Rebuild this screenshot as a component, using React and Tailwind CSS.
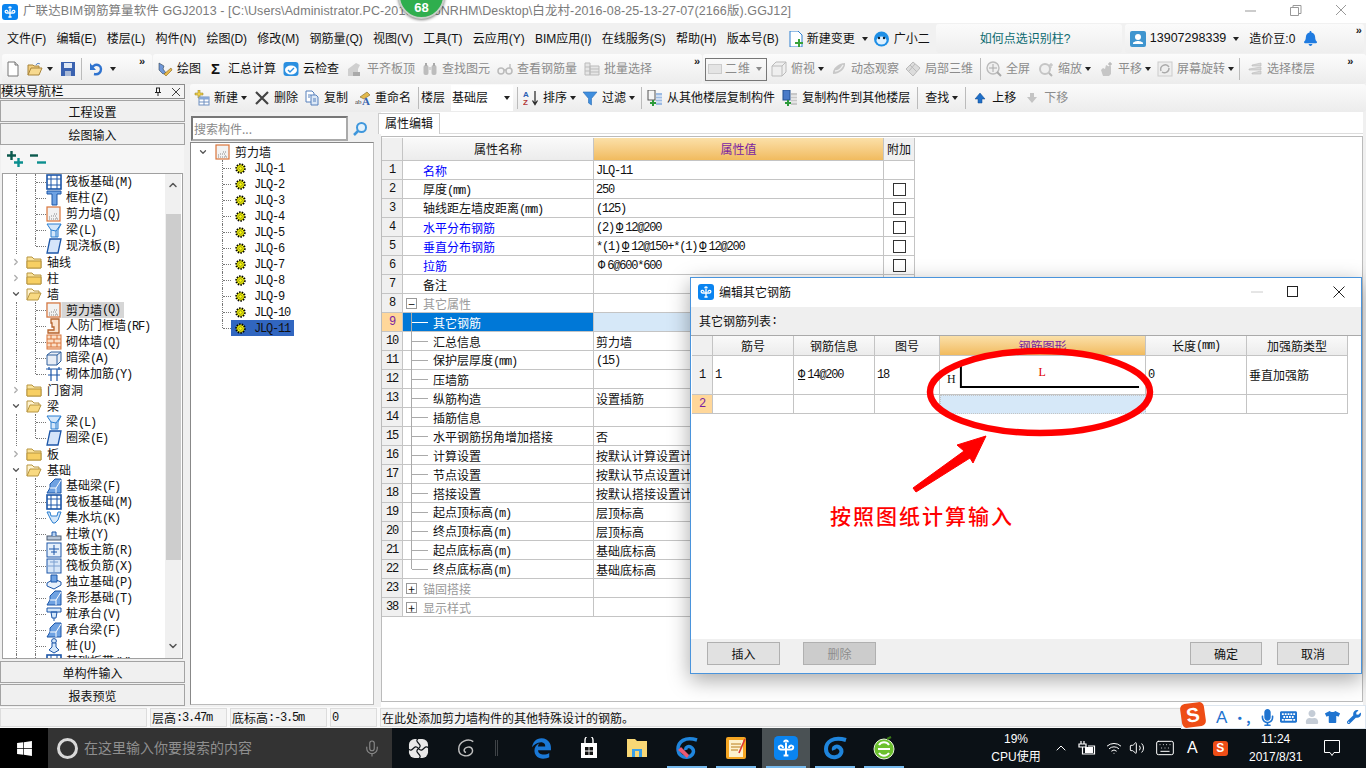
import React from 'react';
import { ChevronUp, ChevronDown, ChevronRight, Mic, Wifi, Volume2, Keyboard } from 'lucide-react';
import { FaBell, FaEdgeLegacy, FaKeyboard, FaMicrophone, FaTshirt, FaUser, FaWrench, FaWindows } from 'react-icons/fa';

// SimSun in the original has half-width latin, so latin runs get squeezed to 6px
const Sim = ({ children }) =>
  String(children)
    .split(/([\x20-\x7e]+)/)
    .map((part, i) =>
      /^[\x20-\x7e]/.test(part) ? (
        <span key={i} className="font-['Liberation_Mono',monospace] tracking-[-1.2px]">{part}</span>
      ) : (
        part
      )
    );

const Rebar = ({ plain }) => (
  <span className={`font-['Liberation_Mono',monospace] mx-[2px] ${plain ? '' : 'underline'}`}>Φ</span>
);

const I = ({ children, className = '' }) => (
  <svg viewBox="0 0 16 16" className={`w-4 h-4 shrink-0 ${className}`}>{children}</svg>
);

const Caret = ({ className = '' }) => (
  <svg viewBox="0 0 6 4" className={`w-[6px] h-[4px] shrink-0 ${className}`}><path d="M0 0h6L3 4z" fill="#222" /></svg>
);

const More = ({ className = '' }) => <span className={`text-[11px] leading-none font-bold text-[#222] -mt-4 ${className}`}>»</span>;

const Sep = ({ className = '' }) => <div className={`w-px h-[22px] bg-[#bbb] shrink-0 ${className}`} />;

const Logo = ({ className = 'w-4 h-4' }) => (
  <svg viewBox="0 0 16 16" className={`shrink-0 ${className}`}>
    <rect width="16" height="16" rx="3" fill="#0a84f0" />
    <path d="M8 13.2V4.4M8 9H4.6C3 9 2.6 6.6 4.2 6.4 5.4 6.3 6 7.2 6 8M8 9h3.4c1.6 0 2-2.4.4-2.6-1.2-.1-1.8.8-1.8 1.6M6.8 4.2C6.8 2.6 9.2 2.6 9.2 4.2M6.4 13h3.2" fill="none" stroke="#fff" strokeWidth="1.3" />
  </svg>
);

// toolbar icons
const tb = {
  doc: <I><path d="M3 1h7l3 3v11H3z" fill="#fff" stroke="#777" /><path d="M10 1v3h3" fill="#ddd" stroke="#777" /></I>,
  open: <I><path d="M1 14V4h5l1 1h5v2" fill="#f3cf80" stroke="#a8843a" /><path d="M1 14h11l3-7H4z" fill="#f7d98f" stroke="#a8843a" /><path d="M9 4c1-2 3-2 4-1" fill="none" stroke="#5a87c5" /></I>,
  save: <I><rect x="1" y="1" width="14" height="14" fill="#3a62b0" /><rect x="4" y="2" width="8" height="5" fill="#dfe8f5" /><rect x="5" y="10" width="6" height="5" fill="#a9b9d6" /></I>,
  undo: <I><path d="M6 13c5 1 7-2 7-5 0-3-3-5-6-4L4 6" fill="none" stroke="#2f73cf" strokeWidth="2.4" /><path d="M2 2v7h6z" fill="#2f73cf" /></I>,
  draw: <I><path d="M2 2l5 3-1 3 3 4-3 1-4-4z" fill="#6f97d8" stroke="#345" strokeWidth=".6" /><path d="M7 13l7-6 1 2-6 6z" fill="#e8b84a" stroke="#86651c" strokeWidth=".6" /></I>,
  cloud: <I><rect x=".5" y="1" width="15" height="14" rx="3" fill="#2b8fe0" /><ellipse cx="8" cy="9" rx="6" ry="4.5" fill="#fff" /><path d="M5 9l2 2 4-4" fill="none" stroke="#2b8fe0" strokeWidth="1.4" /></I>,
  level: <I><path d="M1 15V8l8-6 4 2-2 4v7z" fill="#cfcfcf" /><path d="M6 15v-4h7v4z" fill="#a9a9a9" /></I>,
  find: <I><rect x="1.5" y="4" width="5" height="10" rx="2" fill="#bdbdbd" /><rect x="9.5" y="4" width="5" height="10" rx="2" fill="#bdbdbd" /><rect x="6" y="6" width="4" height="3" fill="#d5d5d5" /><rect x="3" y="2" width="2" height="3" fill="#aaa" /><rect x="11" y="2" width="2" height="3" fill="#aaa" /></I>,
  glasses: <I><circle cx="4" cy="10" r="3" fill="none" stroke="#bbb" strokeWidth="1.5" /><circle cx="12" cy="10" r="3" fill="none" stroke="#bbb" strokeWidth="1.5" /><path d="M7 9h2M13 3v4" stroke="#bbb" strokeWidth="1.3" /></I>,
  batch: <I><path d="M1 2h5v12H1zM6 5h9v9H6z" fill="#e6e6e6" stroke="#bbb" /><path d="M1 6h5M1 10h5M6 8h9M6 11h9" stroke="#bbb" /></I>,
  cube: <I><path d="M1 5l4-4h10v10l-4 4H1z" fill="#efefef" stroke="#bbb" /><path d="M1 5h10v10M11 5l4-4" fill="none" stroke="#bbb" /></I>,
  orbit: <I><path d="M2 13C1 8 7 2 14 2c1 5-5 11-12 11z" fill="#c8c8c8" /><path d="M4 10c3 0 6-2 8-6" fill="none" stroke="#efefef" strokeWidth="1.4" /></I>,
  local: <I><path d="M8 1l7 6-7 8-7-7z" fill="#dcdcdc" stroke="#bbb" /><path d="M5 4l7 7M10 3l-6 7" stroke="#bbb" /></I>,
  full: <I><circle cx="7" cy="7" r="6" fill="#efefef" stroke="#bbb" strokeWidth="1.4" /><path d="M7 3v8M3 7h8" stroke="#aaa" /><path d="M11 11l4 4" stroke="#aaa" strokeWidth="2" /></I>,
  zoom: <I><circle cx="7" cy="8" r="5" fill="#f0f0f0" stroke="#c5c5c5" strokeWidth="2" /><path d="M11 12l3 3" stroke="#b5b5b5" strokeWidth="2" /><path d="M13 2v5M11 4h4" stroke="#bbb" /></I>,
  pan: <I><path d="M3 9l2-2 2 1 1-4 2 1 3 1v7l-2 2H5z" fill="#c6c6c6" /><path d="M12 1v5M10 3h4" stroke="#aaa" /></I>,
  rotate: <I><rect x="1" y="1" width="14" height="14" fill="#eee" stroke="#ccc" /><path d="M4 10a4.5 4.5 0 0 1 8-4M12 7a4.5 4.5 0 0 1-7 4" fill="none" stroke="#aaa" strokeWidth="1.4" /></I>,
  floors: <I><path d="M5 4l9-2v3H5zM2 8l12-2v3H2zM5 12l9-2v3H5z" fill="#d8d8d8" stroke="#bbb" strokeWidth=".6" /></I>,
  add: <I><path d="M1 3h3V0h2v3h3v2H6v3H4V5H1z" fill="#f1d14c" stroke="#8d7a19" strokeWidth=".5" /><rect x="5" y="7" width="10" height="8" fill="#fff" stroke="#6f8fc0" /><rect x="5" y="7" width="10" height="2.5" fill="#87a8d8" /><path d="M10 9v6M5 12h10" stroke="#6f8fc0" /></I>,
  del: <I><path d="M2 2l12 12M14 2L2 14" stroke="#444" strokeWidth="2.2" /></I>,
  copy: <I><path d="M2 1h6l2 2v9H2z" fill="#fff" stroke="#5680bc" /><path d="M7 5h5l2 2v8H7z" fill="#dce8f6" stroke="#5680bc" /><path d="M4 5h3M4 7h2M9 9h3M9 11h3" stroke="#5680bc" /></I>,
  rename: <I><path d="M5 7l7-5 3 3-6 4z" fill="#e2b94c" stroke="#7e6520" strokeWidth=".6" /><text x="0" y="14" fontSize="7" fill="#333" fontFamily="Liberation Serif">ab</text><text x="7" y="15" fontSize="11" fontWeight="700" fill="#3462ad" fontFamily="Liberation Serif">A</text></I>,
  sort: <I><text x="0" y="7" fontSize="8" fontWeight="700" fill="#2a5fb3" fontFamily="Liberation Sans">A</text><text x="0" y="15" fontSize="8" fontWeight="700" fill="#b33a3a" fontFamily="Liberation Sans">Z</text><path d="M12 1v12M9.5 10.5l2.5 4 2.5-4" fill="none" stroke="#222" strokeWidth="1.2" /></I>,
  funnel: <I><path d="M1 2h14L9.5 8.5V15l-3-2V8.5z" fill="#3f8ede" stroke="#2a6cb3" strokeWidth=".6" /></I>,
  fromFloor: <I><rect x="1" y="0" width="7" height="10" fill="#f5f5f5" stroke="#555" /><rect x="9" y="3" width="6" height="12" fill="#9dbbe3" /><path d="M9 6h6M9 9h6M9 12h6" stroke="#fff" /><path d="M3 12h2v-2h2v2h2v2H7v2H5v-2H3z" fill="#2c9a3a" /></I>,
  toFloor: <I><rect x="1" y="0" width="7" height="10" fill="#4a7bc8" stroke="#24508f" /><rect x="9" y="3" width="6" height="12" fill="#c8c8c8" /><path d="M9 6h6M9 9h6M9 12h6" stroke="#fff" /><path d="M3 12h2v-2h2v2h2v2H7v2H5v-2H3z" fill="#2c9a3a" /></I>,
  up: <I><path d="M8 3l5 6h-3v4H6V9H3z" fill="#1f6fc8" stroke="#104a8c" strokeWidth=".5" /></I>,
  down: <I><path d="M8 13l5-6h-3V3H6v4H3z" fill="#c4c4c4" /></I>,
  change: <I><path d="M2 0h8l4 4v12H2z" fill="#fff" stroke="#2d7fd0" /><path d="M7 11h3V8h2v3h3v2h-3v3h-2v-3H7z" fill="#38a23a" /></I>,
  face: <svg viewBox="0 0 16 16" className="w-[17px] h-[16px] shrink-0"><circle cx="8" cy="8" r="7.5" fill="#1e8fe6" /><ellipse cx="8" cy="9.5" rx="5" ry="4" fill="#dff1ff" /><circle cx="5.5" cy="7" r="1.2" fill="#123" /><circle cx="10.5" cy="7" r="1.2" fill="#123" /></svg>,
};

// tree icons
const tree = {
  raft: <I><rect x="1" y="1" width="14" height="14" fill="#fff" stroke="#1c56a8" strokeWidth="1.6" /><path d="M1 5h14M1 11h14M5 1v14M11 1v14" stroke="#1c56a8" /></I>,
  column: <I><path d="M1 1h14v3h-4v11H6V4H1z" fill="#6fa2e2" stroke="#1c56a8" /></I>,
  wall: <I><rect x="1" y="1" width="13" height="14" fill="#f2f2f2" stroke="#d9743a" strokeWidth="1.2" /><path d="M3 13h9M5 10h6M3 11h2M8 8h3M10 12h2" stroke="#888" strokeDasharray="1 1" /></I>,
  beam: <I><path d="M1 2h14l-3 6v7H5V8z" fill="#d4e7fa" stroke="#2b7fd0" /><path d="M5 8l5 1 5-7M10 9v6" fill="none" stroke="#2b7fd0" /></I>,
  slab: <I><path d="M4 1h11l-3 14H1z" fill="#d5e5fa" stroke="#1c56a8" strokeWidth="1.3" /></I>,
  rf: <I><path d="M5 1h8v14H2v-3h6V9H6V5H5z" fill="#fbe4cf" stroke="#b5622b" strokeWidth="1.3" /></I>,
  brick: <I><rect x="1" y="1" width="14" height="14" fill="#fbe0c8" stroke="#d9743a" /><path d="M1 5h14M1 9h14M1 13h14M5 1v4M11 1v4M8 5v4M5 9v4M11 9v4" stroke="#d9743a" /></I>,
  hidden: <I><path d="M1 5l4-3h10v9l-4 4H1z" fill="#e8edf5" stroke="#2f5f9c" /><path d="M1 5h10v10M11 5l4-3" fill="none" stroke="#2f5f9c" /></I>,
  rebar: <I><path d="M0 3h16M3 1v3M13 1v3M5 3v12M11 3v12M2 9h12" fill="none" stroke="#1c56a8" strokeWidth="1.2" /></I>,
  strip: <I><path d="M1 15l3-5V6l5-5h6v14z" fill="#6fa2e2" stroke="#1c56a8" /><path d="M4 10h6v5M10 10l5-8" fill="none" stroke="#fff" /></I>,
  pit: <I><path d="M1 2l3 0 1 4h6l1-4h3l-3 8-3 3H7l-2-3z" fill="#d4e7fa" stroke="#2b7fd0" /></I>,
  pier: <I><rect x="1" y="10" width="14" height="4" fill="#b8c6d8" stroke="#4a5a70" /><path d="M6 10V6h4v4" fill="#b9d2f0" stroke="#1c56a8" /></I>,
  main: <I><rect x="1" y="1" width="14" height="14" fill="#e6f0fb" stroke="#1c56a8" /><path d="M3 7h10M8 3v10M5 10h6" stroke="#1c56a8" /></I>,
  neg: <I><rect x="1" y="1" width="14" height="14" fill="#d7e6f8" stroke="#1c56a8" /><path d="M1 8h14M8 1v14M4 4h8" stroke="#7a9fd0" /></I>,
  iso: <I><path d="M1 9l7-4 7 3v3l-7 4-7-3z" fill="#e9f1fb" stroke="#1c56a8" /><path d="M5 1h6v7H5z" fill="#6fa2e2" stroke="#1c56a8" /></I>,
  cap: <I><path d="M1 2h14v4H1zM5 6h6l-1 6H6zM8 12v3" fill="#d4e7fa" stroke="#1c56a8" /></I>,
  pile: <I><circle cx="8" cy="3" r="2.4" fill="#d4e7fa" stroke="#1c56a8" /><path d="M6 5h4v4l3 3-5 3-5-3 3-3z" fill="#d4e7fa" stroke="#1c56a8" /></I>,
  closed: <I><path d="M1 3h5l2 2h7v9H1z" fill="#fbe39a" stroke="#b79540" /><path d="M1 7h14v7H1z" fill="#f7cf63" stroke="#b79540" /></I>,
  opened: <I><path d="M1 14V3h5l2 2h5v2" fill="#fff3cf" stroke="#b79540" /><path d="M1 14h11l3-7H4z" fill="#f8d981" stroke="#b79540" /></I>,
};

const Gear = () => (
  <svg viewBox="0 0 12 12" className="w-[11px] h-[11px] shrink-0">
    <circle cx="6" cy="6" r="4.6" fill="#ff0" stroke="#000" strokeWidth="2.2" strokeDasharray="1.6 1.2" />
    <circle cx="6" cy="6" r="2" fill="#ff0" stroke="#444" strokeWidth=".6" />
  </svg>
);

function Tool({ icon, label, caret, off, className = '', gap = 'gap-1' }) {
  return (
    <div className={`flex items-center shrink-0 whitespace-nowrap ${gap} ${off ? 'text-[#8c8c8c]' : 'text-[#111]'} ${className}`}>
      {icon}
      <span>{label}</span>
      {caret && <Caret className="-ml-px" />}
    </div>
  );
}

const menus = ['文件(F)', '编辑(E)', '楼层(L)', '构件(N)', '绘图(D)', '修改(M)', '钢筋量(Q)', '视图(V)', '工具(T)', '云应用(Y)', 'BIM应用(I)', '在线服务(S)', '帮助(H)', '版本号(B)'];

function TitleBar() {
  return (
    <div className="h-[23px] bg-white flex items-center relative shrink-0">
      <Logo className="w-4 h-4 ml-[2px]" />
      <span className="ml-[5px] text-[12.5px] tracking-[0.1px] text-[#7b7b7b] whitespace-nowrap font-['Liberation_Sans','Noto_Sans_CJK_SC',sans-serif]">
        广联达BIM钢筋算量软件 GGJ2013 - [C:\Users\Administrator.PC-20160816NRHM\Desktop\白龙村-2016-08-25-13-27-07(2166版).GGJ12]
      </span>
      <svg viewBox="0 0 12 12" className="absolute left-[1245px] top-[5px] w-3 h-3"><path d="M0 6h11" stroke="#999" /></svg>
      <svg viewBox="0 0 12 12" className="absolute left-[1290px] top-[5px] w-3 h-3"><path d="M.5 2.5h8v8h-8zM3 2.5v-2h8v8H8.5" fill="none" stroke="#999" /></svg>
      <svg viewBox="0 0 12 12" className="absolute left-[1335px] top-[4px] w-3 h-3"><path d="M1 1l10 10M11 1L1 11" stroke="#999" /></svg>
      <div className="absolute left-[398px] top-[-28px] w-[47px] h-[47px] rounded-full bg-[#2fae4e] border-[2px] border-[#c8cfc9] shadow-[0_1px_3px_rgba(0,0,0,0.5)] flex items-end justify-center pb-[3px] text-white text-[13px] font-bold leading-none font-['Liberation_Sans',sans-serif]">68</div>
    </div>
  );
}

function MenuBar() {
  return (
    <div className="h-[31px] bg-[#f1f1f1] flex items-start shrink-0 text-[12px] font-['Liberation_Sans','Noto_Sans_CJK_SC',sans-serif] text-[#111]">
      <div className="flex items-center h-[30px] pt-px pl-[7px] gap-[10.2px] whitespace-nowrap">
        {menus.map((m) => <span key={m}>{m}</span>)}
      </div>
      <Tool icon={tb.change} label="新建变更" gap="gap-[3px]" className="ml-[9px] h-[30px] pt-px" />
      <Caret className="ml-[7px] mt-[14px]" />
      <Tool icon={tb.face} label="广小二" gap="gap-1" className="ml-[5px] h-[30px] pt-px" />
      <div className="ml-[6px] mt-[1px] w-[186px] h-[29px] rounded-[3px] bg-gradient-to-b from-[#fbfbfb] to-[#eeeeee] flex items-center pl-[44px] pt-px text-[#0b6a70]">如何点选识别柱?</div>
      <div className="ml-[3px] mt-[1px] w-[239px] h-[29px] rounded-[3px] bg-gradient-to-b from-[#fbfbfb] to-[#eeeeee] flex items-center relative">
        <svg viewBox="0 0 16 16" className="w-4 h-4 ml-[5px]"><rect width="16" height="16" rx="2" fill="#3f95cf" /><circle cx="8" cy="6" r="3" fill="#fff" /><path d="M3 13h10v-1c0-1-3-2-5-2s-5 1-5 2z" fill="#fff" /></svg>
        <span className="ml-[4px] text-[12.5px]">13907298339</span>
        <Caret className="ml-[7px]" />
        <span className="ml-[10px]">造价豆:0</span>
        <FaBell className="ml-[9px] w-[13px] h-[15px] text-[#1f7be0]" />
        <More className="ml-auto mr-[2px]" />
      </div>
    </div>
  );
}

function MainToolbar() {
  const bar = 'h-[30px] rounded-[3px] bg-gradient-to-b from-[#fcfcfc] to-[#ececec] flex items-center';
  return (
    <div className="h-[30px] bg-[#f1f1f1] flex shrink-0 text-[12px] pl-[2px] gap-px whitespace-nowrap font-['Liberation_Sans','Noto_Sans_CJK_SC',sans-serif]">
      <div className={`${bar} w-[150px]`}>
        <span className="ml-[3px] flex">{tb.doc}</span>
        <span className="ml-[6px] flex">{tb.open}</span>
        <Caret className="ml-[4px]" />
        <span className="ml-[7px] flex">{tb.save}</span>
        <Sep className="ml-[5px]" />
        <span className="ml-[6px] flex">{tb.undo}</span>
        <Caret className="ml-[6px]" />
        <More className="ml-[23px]" />
      </div>
      <div className={`${bar} w-[549px]`}>
        <Tool icon={tb.draw} label="绘图" className="ml-[4px]" />
        <span className="ml-[10px] w-[9px] font-bold text-[15px] -mt-[2px]">Σ</span>
        <span className="ml-[8px]">汇总计算</span>
        <Tool icon={tb.cloud} label="云检查" className="ml-[7px]" />
        <Tool off icon={tb.level} label="平齐板顶" className="ml-[8px]" />
        <Tool off icon={tb.find} label="查找图元" className="ml-[7px]" />
        <Tool off icon={tb.glasses} label="查看钢筋量" className="ml-[7px]" />
        <Tool off icon={tb.batch} label="批量选择" className="ml-[7px]" />
        <More className="ml-[42px]" />
      </div>
      <div className={`${bar} flex-1`}>
        <div className="ml-[2px] w-[62px] h-[23px] border border-[#777] flex items-center text-[#8c8c8c] px-[2px]">
          <div className="w-[14px] h-[10px] bg-[#e4e4e4] border border-[#ccc]" />
          <span className="ml-[3px] tracking-[1px]">二维</span>
          <Caret className="ml-auto opacity-50 mr-[2px]" />
        </div>
        <Tool off icon={tb.cube} label="俯视" caret className="ml-[4px]" />
        <Tool off icon={tb.orbit} label="动态观察" className="ml-[7px]" />
        <Tool off icon={tb.local} label="局部三维" className="ml-[6px]" />
        <Sep className="ml-[7px]" />
        <Tool off icon={tb.full} label="全屏" className="ml-[5px]" />
        <Tool off icon={tb.zoom} label="缩放" caret className="ml-[8px]" />
        <Tool off icon={tb.pan} label="平移" caret className="ml-[7px]" />
        <Tool off icon={tb.rotate} label="屏幕旋转" caret className="ml-[6px]" />
        <Sep className="ml-[5px]" />
        <Tool off icon={tb.floors} label="选择楼层" className="ml-[7px]" />
        <More className="ml-[32px]" />
      </div>
    </div>
  );
}

const navTree = [
  { k: 'raft', t: '筏板基础(M)', d: 1 },
  { k: 'column', t: '框柱(Z)', d: 1 },
  { k: 'wall', t: '剪力墙(Q)', d: 1 },
  { k: 'beam', t: '梁(L)', d: 1 },
  { k: 'slab', t: '现浇板(B)', d: 1, end: true },
  { k: 'closed', t: '轴线' },
  { k: 'closed', t: '柱' },
  { k: 'opened', t: '墙', open: true },
  { k: 'wall', t: '剪力墙(Q)', d: 1, sel: true },
  { k: 'rf', t: '人防门框墙(RF)', d: 1 },
  { k: 'brick', t: '砌体墙(Q)', d: 1 },
  { k: 'hidden', t: '暗梁(A)', d: 1 },
  { k: 'rebar', t: '砌体加筋(Y)', d: 1, end: true },
  { k: 'closed', t: '门窗洞' },
  { k: 'opened', t: '梁', open: true },
  { k: 'beam', t: '梁(L)', d: 1 },
  { k: 'slab', t: '圈梁(E)', d: 1, end: true },
  { k: 'closed', t: '板' },
  { k: 'opened', t: '基础', open: true },
  { k: 'strip', t: '基础梁(F)', d: 1 },
  { k: 'raft', t: '筏板基础(M)', d: 1 },
  { k: 'pit', t: '集水坑(K)', d: 1 },
  { k: 'pier', t: '柱墩(Y)', d: 1 },
  { k: 'main', t: '筏板主筋(R)', d: 1 },
  { k: 'neg', t: '筏板负筋(X)', d: 1 },
  { k: 'iso', t: '独立基础(P)', d: 1 },
  { k: 'strip', t: '条形基础(T)', d: 1 },
  { k: 'cap', t: '桩承台(V)', d: 1 },
  { k: 'strip', t: '承台梁(F)', d: 1 },
  { k: 'pile', t: '桩(U)', d: 1 },
  { k: 'raft', t: '基础板带(W)', d: 1 },
];

function NavRow({ item }) {
  if (item.d) {
    return (
      <div className="h-4 relative flex items-center pl-[43px] shrink-0">
        <div className="absolute left-[13px] top-0 bottom-0 border-l border-dotted border-[#777]" />
        <div className={`absolute left-[32px] top-0 border-l border-dotted border-[#777] ${item.end ? 'h-2' : 'h-4'}`} />
        <div className="absolute left-[33px] top-2 w-[10px] border-t border-dotted border-[#777]" />
        <span className={item.sel ? 'bg-[#e8e8e8] flex' : 'flex'}>{tree[item.k]}</span>
        <span className={`px-[4px] whitespace-nowrap ${item.sel ? 'bg-[#d6d6d6] h-4 flex items-center' : ''}`}><Sim>{item.t}</Sim></span>
      </div>
    );
  }
  return (
    <div className="h-4 relative flex items-center pl-[23px] shrink-0">
      <div className="absolute left-[8px] top-0 flex h-4 items-center">
        {item.open ? <ChevronDown className="w-[10px] h-[10px] text-[#555]" strokeWidth={3} /> : <ChevronRight className="w-[10px] h-[10px] text-[#aaa]" strokeWidth={3} />}
      </div>
      {tree[item.k]}
      <span className="ml-[5px] whitespace-nowrap">{item.t}</span>
    </div>
  );
}

const NavButton = ({ children, className = '' }) => (
  <div className={`h-[22px] pt-px bg-[#f0f0f0] border border-[#a3a3a3] flex items-center justify-center text-[#111] shrink-0 ${className}`}>{children}</div>
);

function LeftPanel() {
  return (
    <div className="w-[185px] shrink-0 flex flex-col bg-[#f0f0f0] pb-[2px]">
      <div className="h-[15px] border border-[#8c8c8c] bg-[#f4f4f4] flex items-center text-[12.5px] leading-none shrink-0 relative">
        <span className="whitespace-nowrap">模块导航栏</span>
        <svg viewBox="0 0 10 10" className="absolute left-[152px] top-[2px] w-[10px] h-[10px]"><path d="M3 1h4M3.5 1v4M6.5 1v4M2 5.5h6M5 5.5V9" fill="none" stroke="#222" /></svg>
        <svg viewBox="0 0 10 10" className="absolute left-[170px] top-[2px] w-[10px] h-[10px]"><path d="M1 1l8 8M9 1L1 9" stroke="#444" /></svg>
      </div>
      <NavButton className="mt-px">工程设置</NavButton>
      <NavButton className="mt-px">绘图输入</NavButton>
      <div className="h-[28px] mx-px bg-[#f6f6f6] flex items-center pl-[6px] gap-[7px] shrink-0">
        <svg viewBox="0 0 16 16" className="w-4 h-4"><path d="M0 4.5h9M4.5 0v9" stroke="#0c5a4e" strokeWidth="2.4" /><path d="M7 11.5h9M11.5 7v9" stroke="#0b8f8f" strokeWidth="2.4" /></svg>
        <svg viewBox="0 0 16 16" className="w-4 h-4"><path d="M0 4.5h8" stroke="#0c5a4e" strokeWidth="2.4" /><path d="M7 11.5h9" stroke="#0b8f8f" strokeWidth="2.4" /></svg>
      </div>
      <div className="h-[486px] mx-[2px] border border-[#a0a0a0] bg-white flex overflow-hidden shrink-0 relative">
        <div className="flex-1 flex flex-col overflow-hidden">
          {navTree.map((item, i) => <NavRow key={i} item={item} />)}
        </div>
        <div className="w-[16px] bg-[#f0f0f0] flex flex-col items-center shrink-0 mr-px">
          <ChevronUp className="w-3 h-3 mt-[5px] text-[#555]" strokeWidth={3} />
          <div className="w-[15px] h-[346px] bg-[#cdcdcd] mt-[23px]" />
          <ChevronDown className="w-3 h-3 mt-auto mb-[6px] text-[#555]" strokeWidth={3} />
        </div>
      </div>
      <NavButton className="mt-[2px]">单构件输入</NavButton>
      <NavButton className="mt-px">报表预览</NavButton>
    </div>
  );
}

function ActionToolbar() {
  return (
    <div className="h-[28px] ml-[5px] bg-gradient-to-b from-[#fbfbfb] to-[#ececec] rounded-[3px] flex items-center whitespace-nowrap shrink-0 text-[12px] font-['Liberation_Sans','Noto_Sans_CJK_SC',sans-serif]">
      <Tool icon={tb.add} label="新建" caret className="ml-[4px]" />
      <Tool icon={tb.del} label="删除" className="ml-[7px]" />
      <Tool icon={tb.copy} label="复制" className="ml-[6px]" />
      <Tool icon={tb.rename} label="重命名" className="ml-[7px]" />
      <Sep className="ml-[7px]" />
      <span className="ml-[2px]">楼层</span>
      <div className="ml-[6px] w-[62px] h-[26px] bg-white flex items-center pl-px">
        基础层
        <Caret className="ml-auto mr-[3px]" />
      </div>
      <Sep className="ml-[4px]" />
      <Tool icon={tb.sort} label="排序" caret className="ml-[5px]" />
      <Tool icon={tb.funnel} label="过滤" caret className="ml-[6px]" />
      <Sep className="ml-[6px]" />
      <Tool icon={tb.fromFloor} label="从其他楼层复制构件" className="ml-[5px]" />
      <Tool icon={tb.toFloor} label="复制构件到其他楼层" className="ml-[7px]" />
      <Sep className="ml-[7px]" />
      <Tool label="查找" caret className="ml-[7px]" />
      <Sep className="ml-[7px]" />
      <Tool icon={tb.up} label="上移" className="ml-[6px]" />
      <Tool off icon={tb.down} label="下移" className="ml-[8px]" />
    </div>
  );
}

function ComponentTree() {
  const names = ['JLQ-1', 'JLQ-2', 'JLQ-3', 'JLQ-4', 'JLQ-5', 'JLQ-6', 'JLQ-7', 'JLQ-8', 'JLQ-9', 'JLQ-10', 'JLQ-11'];
  return (
    <div className="w-[184px] ml-[5px] flex flex-col shrink-0">
      <div className="h-[30px] flex items-end pb-px pl-px shrink-0">
        <div className="w-[157px] h-[25px] bg-white border-2 border-[#777] border-b-[#aaa] border-r-[#aaa] flex items-center pl-px text-[#8a8a8a]">搜索构件...</div>
        <svg viewBox="0 0 16 16" className="w-4 h-4 ml-[4px] mb-[4px]"><circle cx="9.5" cy="6.5" r="4.5" fill="#e4f2fc" stroke="#3f97dc" strokeWidth="2" /><path d="M6 10l-4 4" stroke="#3f97dc" strokeWidth="2.5" /></svg>
      </div>
      <div className="flex-1 bg-white border border-[#888] border-r-[#bbb] border-b-[#bbb] mb-[2px] pt-[1px]">
        <div className="h-4 flex items-center relative pl-[24px]">
          <ChevronDown className="absolute left-[7px] top-[3px] w-[10px] h-[10px] text-[#555]" strokeWidth={3} />
          {tree.wall}
          <span className="ml-[4px]">剪力墙</span>
        </div>
        {names.map((n, i) => (
          <div key={n} className="h-4 flex items-center relative pl-[44px]">
            <div className={`absolute left-[31px] top-0 border-l border-dotted border-[#777] ${i === 10 ? 'h-2' : 'h-4'}`} />
            <div className="absolute left-[32px] top-2 w-[8px] border-t border-dotted border-[#777]" />
            {i === 10 && <div className="absolute left-[40px] top-0 w-[63px] h-4 bg-[#3166c0]" />}
            <span className="relative flex"><Gear /></span>
            <span className="relative ml-[8px] text-[#111]"><Sim>{n}</Sim></span>
          </div>
        ))}
      </div>
    </div>
  );
}

const props = [
  { n: 1, t: '名称', v: 'JLQ-11', blue: true },
  { n: 2, t: '厚度(mm)', v: '250', box: true },
  { n: 3, t: '轴线距左墙皮距离(mm)', v: '(125)', box: true },
  { n: 4, t: '水平分布钢筋', rebar: ['(2)', '12@200'], blue: true, box: true },
  { n: 5, t: '垂直分布钢筋', rebar: ['*(1)', '12@150+*(1)', '12@200'], blue: true, box: true },
  { n: 6, t: '拉筋', rebar: ['', '6@600*600'], plain: true, blue: true, box: true },
  { n: 7, t: '备注' },
  { n: 8, t: '其它属性', group: '−' },
  { n: 9, t: '其它钢筋', sub: true, sel: true },
  { n: 10, t: '汇总信息', v: '剪力墙', sub: true },
  { n: 11, t: '保护层厚度(mm)', v: '(15)', sub: true },
  { n: 12, t: '压墙筋', sub: true },
  { n: 13, t: '纵筋构造', v: '设置插筋', sub: true },
  { n: 14, t: '插筋信息', sub: true },
  { n: 15, t: '水平钢筋拐角增加搭接', v: '否', sub: true },
  { n: 16, t: '计算设置', v: '按默认计算设置计算', sub: true },
  { n: 17, t: '节点设置', v: '按默认节点设置计算', sub: true },
  { n: 18, t: '搭接设置', v: '按默认搭接设置计算', sub: true },
  { n: 19, t: '起点顶标高(m)', v: '层顶标高', sub: true },
  { n: 20, t: '终点顶标高(m)', v: '层顶标高', sub: true },
  { n: 21, t: '起点底标高(m)', v: '基础底标高', sub: true },
  { n: 22, t: '终点底标高(m)', v: '基础底标高', sub: true, last: true },
  { n: 23, t: '锚固搭接', group: '+' },
  { n: 38, t: '显示样式', group: '+' },
];

function PropRow({ row }) {
  return (
    <div className="flex h-[19px] w-[533px] border-b border-[#c4c4c4] shrink-0">
      <div className={`w-[21px] flex items-center justify-center border-r border-[#c4c4c4] shrink-0 ${row.sel ? 'bg-[#ffd79a] text-[#7a1fa2]' : 'bg-[#f0f0f0]'}`}>
        <span className="font-['Liberation_Mono',monospace] tracking-[-1.2px]">{row.n}</span>
      </div>
      <div className={`w-[191px] flex items-center pt-px relative border-r border-[#c4c4c4] shrink-0 whitespace-nowrap ${row.sel ? 'bg-[#0078d7] text-white' : ''}`}>
        {row.sub && <div className={`absolute left-[8px] top-0 w-px bg-[#aaa] ${row.last ? 'h-[9px]' : 'h-[19px]'}`} />}
        {row.sub && <div className={`absolute left-[9px] top-[9px] w-[16px] h-px ${row.sel ? 'bg-white' : 'bg-[#aaa]'}`} />}
        {row.group && (
          <span className="ml-[3px] w-[11px] h-[11px] border border-[#999] flex items-center justify-center text-[12px] leading-none text-[#111] bg-white shrink-0">{row.group}</span>
        )}
        <span className={`${row.group ? 'ml-[6px] text-[#9a9a9a]' : row.sub ? 'ml-[30px]' : 'ml-[20px]'} ${row.blue ? 'text-[#0000ff]' : ''}`}><Sim>{row.t}</Sim></span>
      </div>
      <div className={`w-[290px] flex items-center pt-px pl-[2px] border-r border-[#c4c4c4] shrink-0 whitespace-nowrap overflow-hidden ${row.sel ? 'bg-[#d6e8f8]' : ''}`}>
        {row.rebar
          ? row.rebar.map((part, i) => (
              <React.Fragment key={i}>
                <Sim>{part}</Sim>
                {i < row.rebar.length - 1 && <Rebar plain={row.plain} />}
              </React.Fragment>
            ))
          : row.v && <Sim>{row.v}</Sim>}
      </div>
      <div className="w-[31px] flex items-center justify-center border-r border-[#c4c4c4] shrink-0">
        {row.box && <div className="w-[13px] h-[13px] border border-[#333] bg-white" />}
      </div>
    </div>
  );
}

function PropertyPanel() {
  return (
    <div className="flex-1 ml-[7px] mr-[3px] flex flex-col min-w-0 pt-px bg-white">
      <div className="h-[23px] flex items-start -ml-[3px] shrink-0">
        <div className="h-[21px] w-[62px] bg-white border border-[#ccc] border-b-0 flex items-start justify-center pt-[3px] text-[#111]">属性编辑</div>
        <div className="flex-1 h-[21px] border-b border-[#ddd]" />
      </div>
      <div className="flex-1 bg-white border border-[#bbb] mb-[5px] pt-px">
        <div className="flex h-[23px] w-[533px] border-b border-[#c4c4c4] shrink-0">
          <div className="w-[21px] bg-[#f0f0f0] border-r border-[#c4c4c4]" />
          <div className="w-[191px] bg-gradient-to-b from-[#fafafa] to-[#ececec] border-r border-[#c4c4c4] flex items-center justify-center">属性名称</div>
          <div className="w-[290px] bg-gradient-to-b from-[#fbe0a8] to-[#f1bb5e] border-r border-[#c4c4c4] flex items-center justify-center text-[#7a1fa2]">属性值</div>
          <div className="w-[31px] bg-[#f0f0f0] border-r border-[#c4c4c4] flex items-center justify-center">附加</div>
        </div>
        {props.map((row) => <PropRow key={row.n} row={row} />)}
      </div>
    </div>
  );
}

function DialogGrid() {
  const cell = 'border-r border-b border-[#c4c4c4] flex items-center whitespace-nowrap';
  return (
    <div className="ml-px grid grid-cols-[21px_81px_81px_65px_206px_101px_101px] grid-rows-[20px_39px_19px] w-[655px]">
      <div className={`${cell} bg-[#f0f0f0]`} />
      {['筋号', '钢筋信息', '图号'].map((h) => (
        <div key={h} className={`${cell} justify-center bg-gradient-to-b from-[#fafafa] to-[#ececec]`}>{h}</div>
      ))}
      <div className={`${cell} justify-center bg-gradient-to-b from-[#fbe0a8] to-[#f1bb5e] text-[#7a1fa2]`}>钢筋图形</div>
      <div className={`${cell} justify-center bg-gradient-to-b from-[#fafafa] to-[#ececec]`}><Sim>长度(mm)</Sim></div>
      <div className={`${cell} justify-center bg-gradient-to-b from-[#fafafa] to-[#ececec]`}>加强筋类型</div>

      <div className={`${cell} justify-center bg-[#f0f0f0]`}><Sim>1</Sim></div>
      <div className={`${cell} pl-[2px]`}><Sim>1</Sim></div>
      <div className={`${cell} pl-[2px]`}><Rebar /><Sim>14@200</Sim></div>
      <div className={`${cell} pl-[2px]`}><Sim>18</Sim></div>
      <div className={cell}>
        <svg viewBox="0 0 206 39" className="w-[206px] h-[39px]">
          <path d="M21 10v21h179" fill="none" stroke="#000" strokeWidth="2" />
          <text x="7" y="27" fontSize="12" fill="#111" fontFamily="Liberation Serif">H</text>
          <text x="99" y="20" fontSize="12" fill="#e00000" fontFamily="Liberation Serif">L</text>
        </svg>
      </div>
      <div className={`${cell} pl-[2px]`}><Sim>0</Sim></div>
      <div className={`${cell} pl-[2px]`}>垂直加强筋</div>

      <div className={`${cell} justify-center bg-[#ffd79a] text-[#7a1fa2]`}><Sim>2</Sim></div>
      <div className={cell} />
      <div className={cell} />
      <div className={cell} />
      <div className={`${cell} bg-[#d6e8f8] border-dotted border-t border-l border-[#555]`} />
      <div className={cell} />
      <div className={cell} />
    </div>
  );
}

const DlgButton = ({ children, off, className = '' }) => (
  <div className={`h-[23px] flex items-center justify-center border border-[#b0b0b0] ${off ? 'bg-[#cccccc] text-[#8c8c8c]' : 'bg-[#e1e1e1] text-[#111]'} ${className}`}>{children}</div>
);

function Dialog() {
  return (
    <div className="absolute left-[690px] top-[277px] w-[672px] h-[397px] bg-white border border-[#4a94dc] shadow-[0_6px_20px_rgba(0,0,0,0.35)] flex flex-col text-[#111]">
      <div className="h-[29px] flex items-center pl-[7px] pb-[2px] relative shrink-0">
        <Logo />
        <span className="ml-[5px]">编辑其它钢筋</span>
        <svg viewBox="0 0 12 12" className="absolute left-[560px] top-[8px] w-3 h-3"><path d="M0 6h12" stroke="#ccc" /></svg>
        <svg viewBox="0 0 12 12" className="absolute left-[596px] top-[8px] w-3 h-3"><rect x=".5" y=".5" width="10" height="10" fill="none" stroke="#222" /></svg>
        <svg viewBox="0 0 12 12" className="absolute left-[642px] top-[8px] w-3 h-3"><path d="M.5.5l11 11M11.5.5l-11 11" stroke="#222" /></svg>
      </div>
      <div className="h-[28px] bg-[#efefef] flex items-center pl-[8px] shrink-0"><Sim>其它钢筋列表:</Sim></div>
      <div className="border-t border-[#aaa] flex-1 bg-white"><DialogGrid /></div>
      <div className="h-[34px] bg-[#f0f0f0] flex items-start pt-[3px] pl-[16px] shrink-0">
        <DlgButton className="w-[73px]">插入</DlgButton>
        <DlgButton off className="w-[73px] ml-[23px]">删除</DlgButton>
        <DlgButton className="w-[72px] ml-[314px]">确定</DlgButton>
        <DlgButton className="w-[72px] ml-[15px]">取消</DlgButton>
      </div>
      {/* red marks drawn on top of the screenshot */}
      <svg viewBox="0 0 260 160" className="absolute left-[220px] top-[68px] w-[260px] h-[160px]">
        <ellipse cx="129" cy="46" rx="110" ry="41" fill="none" stroke="#f00" strokeWidth="6.5" />
        <path d="M75 90L46 99L53 105L2 142L5 146L59 112L62 117z" fill="#f00" stroke="#f00" strokeLinejoin="round" />
      </svg>
      <div className="absolute left-[139px] top-[227px] text-[#f00] text-[21px] tracking-[2px] font-medium leading-none whitespace-nowrap">按照图纸计算输入</div>
    </div>
  );
}

function StatusBar() {
  const cell = 'h-[19px] bg-[#f3f3f3] border border-[#dcdcdc] flex items-center shrink-0 whitespace-nowrap';
  return (
    <div className="h-[21px] bg-[#fafafa] flex items-start pt-px gap-[3px] shrink-0 relative">
      <div className={`${cell} w-[147px]`} />
      <div className={`${cell} w-[77px] pl-px`}><Sim>层高:3.47m</Sim></div>
      <div className={`${cell} w-[97px] pl-px`}><Sim>底标高:-3.5m</Sim></div>
      <div className={`${cell} w-[47px] pl-px`}><Sim>0</Sim></div>
      <div className={`${cell} flex-1 pl-px`}>在此处添加剪力墙构件的其他特殊设计的钢筋。</div>
      <div className="absolute left-[1181px] top-[-2px] h-[24px] w-[185px] bg-white border border-[#dde6ef] flex items-center">
        <span className="w-[24px] h-[24px] -ml-px -mt-[4px] bg-[#ee4d16] rounded-[5px] -rotate-[8deg] flex items-center justify-center text-white text-[20px] font-bold leading-none font-['Liberation_Sans',sans-serif]">S</span>
        <span className="ml-[11px] text-[#1f74d0] text-[17px] leading-none font-['Liberation_Sans',sans-serif]">A</span>
        <span className="ml-[6px] text-[#1f74d0] text-[13px] font-bold leading-none">•,</span>
        <FaMicrophone className="ml-[10px] w-[13px] h-[17px] text-[#1f74d0]" />
        <FaKeyboard className="ml-[6px] w-[17px] h-[16px] text-[#1f74d0]" />
        <FaUser className="ml-[8px] w-[14px] h-[14px] text-[#c4ccd6]" />
        <FaTshirt className="ml-[6px] w-[15px] h-[14px] text-[#1f74d0]" />
        <FaWrench className="ml-[7px] w-[14px] h-[14px] text-[#1f74d0]" />
      </div>
    </div>
  );
}

const Slot = ({ children, active, on, className = '' }) => (
  <div className={`w-12 h-10 flex items-center justify-center relative shrink-0 ${active ? 'bg-[#4a5154]' : ''} ${className}`}>
    {children}
    {on && <div className="absolute bottom-0 left-[4px] right-[4px] h-[2px] bg-[#76b9ed]" />}
  </div>
);

function Taskbar() {
  return (
    <div className="h-10 bg-[#0b1116] flex items-center shrink-0 text-white font-['Liberation_Sans','Noto_Sans_CJK_SC',sans-serif]">
      <div className="w-12 h-10 bg-black flex items-center justify-center shrink-0">
        <FaWindows className="w-[17px] h-[17px] text-white" />
      </div>
      <div className="w-[344px] h-10 bg-[#333333] flex items-center shrink-0 relative">
        <div className="ml-[9px] w-[21px] h-[21px] rounded-full border-[3px] border-[#d8d8d8]" />
        <span className="ml-[6px] text-[14px] text-[#8f8f8f]">在这里输入你要搜索的内容</span>
        <Mic className="absolute left-[315px] top-[11px] w-[18px] h-[19px] text-[#8a8a8a]" strokeWidth={1.5} />
      </div>
      <Slot className="ml-[2px]">
        <svg viewBox="0 0 22 22" className="w-[21px] h-[21px]">
          <rect x="1" y="1" width="20" height="20" rx="6" fill="#e8e8e8" />
          <path d="M11 0C5 5 17 6 11 11 5 16 17 17 11 22M0 11C5 17 6 5 11 11 16 17 17 5 22 11" fill="none" stroke="#0b1116" strokeWidth="1.2" />
        </svg>
      </Slot>
      <Slot>
        <svg viewBox="0 0 22 22" className="w-[20px] h-[20px]"><path d="M19 4C13 0 3 4 3 12s9 9 13 6 2-9-3-8-5 5-2 6" fill="none" stroke="#bfbfbf" strokeWidth="1.6" /></svg>
      </Slot>
      <div className="w-[3px] h-[16px] border-x border-[#3f4347] ml-[5px] mr-[19px] shrink-0" />
      <Slot><FaEdgeLegacy className="w-[21px] h-[21px] text-[#1a78d6]" /></Slot>
      <Slot>
        <svg viewBox="0 0 20 22" className="w-[20px] h-[22px]"><path d="M2 6h16v15H2z" fill="#fff" /><path d="M6 7V3a4 4 0 0 1 8 0v4" fill="none" stroke="#fff" strokeWidth="1.4" /><path d="M6 10h3.6v3.6H6zM10.4 10H14v3.6h-3.6zM6 14.4h3.6V18H6zM10.4 14.4H14V18h-3.6z" fill="#111" /></svg>
      </Slot>
      <Slot>
        <svg viewBox="0 0 22 20" className="w-[22px] h-[20px]"><path d="M1 1h8l2 2h10v16H1z" fill="#f8d775" /><rect x="6" y="11" width="10" height="8" fill="#3aa0e8" /><rect x="9" y="13" width="4" height="6" fill="#f8d775" /></svg>
      </Slot>
      <Slot className="ml-[2px]" on>
        <svg viewBox="0 0 24 24" className="w-[24px] h-[24px]"><path d="M22 4C10 0 3 6 3 13c0 6 5 9 10 8s7-6 4-9-7-1-6 2" fill="none" stroke="#1f85dc" strokeWidth="3.5" /><path d="M3 14l9 8 2-3-8-8z" fill="#ea5a73" /></svg>
      </Slot>
      <Slot className="ml-px" on>
        <svg viewBox="0 0 22 24" className="w-[22px] h-[24px]"><rect x="1" y="1" width="20" height="22" rx="2" fill="#f5a623" /><rect x="4" y="4" width="14" height="17" fill="#fdf1cd" /><path d="M6 8h10M6 11h10M6 14h7" stroke="#b97c1a" /><path d="M14 17l6-14" stroke="#d33" strokeWidth="1.6" /></svg>
      </Slot>
      <Slot active on className="ml-[2px]"><Logo className="w-[24px] h-[24px]" /></Slot>
      <Slot className="ml-px" on>
        <svg viewBox="0 0 24 24" className="w-[24px] h-[24px]"><path d="M23 4C10 0 3 6 3 13c0 6 5 9 10 8s7-6 4-9-7-1-6 2" fill="none" stroke="#1f85dc" strokeWidth="4" /></svg>
      </Slot>
      <Slot className="ml-px" on>
        <svg viewBox="0 0 24 24" className="w-[24px] h-[24px]"><circle cx="12" cy="13" r="10" fill="#6cc02e" stroke="#e8f4da" /><path d="M6 13h12M7 9a6 6 0 0 1 10 0M7 17a6 6 0 0 0 10 0" fill="none" stroke="#fff" strokeWidth="2" /><path d="M15 3l4-2" stroke="#3c7f17" strokeWidth="2" /></svg>
      </Slot>
      <div className="ml-[76px] w-[64px] flex flex-col items-center text-[12px] leading-[18px] shrink-0">
        <span>19%</span>
        <span>CPU使用</span>
      </div>
      <ChevronUp className="ml-[5px] w-[16px] h-[16px] text-white" strokeWidth={1.5} />
      <svg viewBox="0 0 18 14" className="ml-[9px] w-[18px] h-[14px]"><path d="M3 0v3M6 0v3M1 3h7v3H1zM4.5 6v7h12V5H10" fill="none" stroke="#fff" strokeWidth="1.2" /><rect x="7" y="6" width="8" height="6" fill="#fff" /></svg>
      <Wifi className="ml-[10px] w-[16px] h-[16px] text-white" strokeWidth={1.5} />
      <Volume2 className="ml-[7px] w-[16px] h-[16px] text-white" strokeWidth={1.5} />
      <Keyboard className="ml-[8px] w-[24px] h-[20px] text-white" strokeWidth={1.2} />
      <span className="ml-[10px] text-[16px] leading-none">A</span>
      <span className="ml-[15px] w-[15px] h-[15px] bg-[#ee4d16] rounded-[3px] flex items-center justify-center text-[12px] font-bold leading-none">S</span>
      <div className="ml-[12px] w-[72px] flex flex-col items-center text-[12px] leading-[18px] shrink-0">
        <span>11:24</span>
        <span>2017/8/31</span>
      </div>
      <svg viewBox="0 0 16 16" className="ml-[12px] w-4 h-4"><path d="M.5.5h15v12H10l-2 3-2-3H.5z" fill="none" stroke="#fff" /></svg>
    </div>
  );
}

export default function App() {
  return (
    <div className="w-[1366px] h-[768px] flex flex-col relative overflow-hidden bg-[#f0f0f0] text-[12px] leading-none text-[#111] font-['Noto_Sans_CJK_SC','Liberation_Sans',sans-serif]">
      <TitleBar />
      <MenuBar />
      <MainToolbar />
      <div className="flex-1 flex min-h-0">
        <LeftPanel />
        <div className="flex-1 flex flex-col min-w-0">
          <ActionToolbar />
          <div className="flex-1 flex min-h-0">
            <ComponentTree />
            <PropertyPanel />
          </div>
        </div>
      </div>
      <StatusBar />
      <Taskbar />
      <Dialog />
    </div>
  );
}
